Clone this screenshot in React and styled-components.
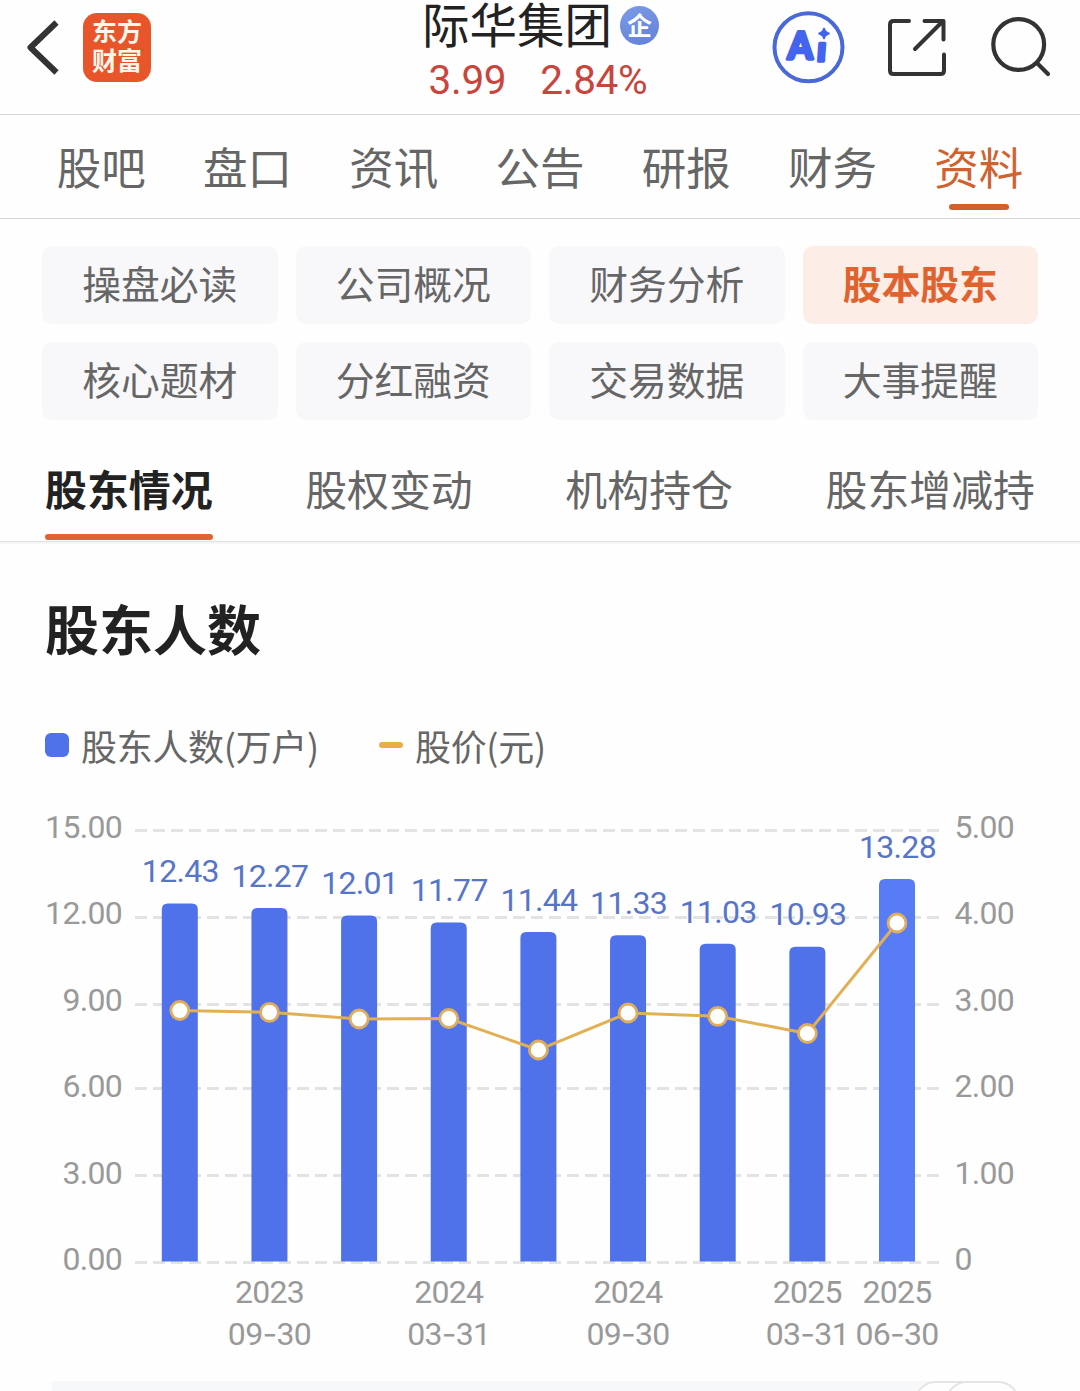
import React from 'react';
import styled, { createGlobalStyle, css } from 'styled-components';

const GlobalStyle = createGlobalStyle`
  * {
    box-sizing: border-box;
  }

  body {
    margin: 0;
    background: #fefefe;
    font-family: 'Noto Sans CJK SC', sans-serif;
    color: #666;
    overflow: hidden;
  }
`;

const Page = styled.div`
  width: 1080px;
  height: 1391px;
  overflow: hidden;
  background: #fefefe;
`;

const Header = styled.header`
  display: grid;
  grid-template-columns: 1fr auto 1fr;
  height: 115px;
  padding: 0 28px 0 24px;
  border-bottom: 1px solid #d6d6d6;
`;

const HeaderLeft = styled.div`
  display: flex;
  align-items: flex-start;
  padding-top: 13px;
  gap: 21px;
`;

const Logo = styled.div`
  width: 68px;
  height: 69px;
  padding-top: 3px;
  border-radius: 14px;
  background: #e8552b;
  color: #fff6ec;
  font-size: 25px;
  font-weight: 700;
  line-height: 29px;
  text-align: center;
`;

const HeaderTitle = styled.div`
  display: flex;
  flex-direction: column;
  align-items: center;
`;

const NameRow = styled.div`
  display: flex;
  align-items: center;
  gap: 8px;
  height: 50px;
  margin-left: 5px;
  color: #222;
  font-size: 47.5px;
  line-height: 46px;
`;

const Name = styled.span`
  height: 50px;
`;

const Badge = styled.span`
  width: 39px;
  height: 39px;
  border-radius: 50%;
  background: linear-gradient(160deg, #7b9ae6, #6381d8);
  color: #fff;
  font-size: 25px;
  font-weight: 700;
  line-height: 37px;
  text-align: center;
`;

const Quote = styled.div`
  display: flex;
  gap: 34px;
  color: #c9453c;
  font-family: Roboto, sans-serif;
  font-size: 40.5px;
  line-height: 61px;
  letter-spacing: -0.3px;
`;

const HeaderRight = styled.div`
  display: flex;
  justify-content: flex-end;
  align-items: flex-start;
  padding-top: 10px;
  gap: 40px;
`;

const Tabs = styled.nav`
  display: flex;
  height: 104px;
  padding: 0 28px;
  border-bottom: 1px solid #d6d6d6;
`;

const Tab = styled.div`
  flex: 1;
  display: flex;
  flex-direction: column;
  align-items: center;
  color: ${({ $active }) => ($active ? '#cf622f' : '#666')};
  font-size: 44.5px;
  line-height: 89px;
  padding-top: 6px;

  ${({ $active }) =>
    $active &&
    css`
      &::after {
        content: '';
        width: 60px;
        height: 6px;
        margin-top: -6px;
        border-radius: 3px;
        background: #d0612f;
      }
    `}
`;

const Chips = styled.div`
  display: grid;
  grid-template-columns: repeat(4, 1fr);
  gap: 18px;
  padding: 27px 42px 0;
`;

const Chip = styled.div`
  height: 78px;
  border-radius: 10px;
  background: ${({ $active }) => ($active ? '#fcede6' : '#f8f8fa')};
  color: ${({ $active }) => ($active ? '#e0632f' : '#666')};
  font-size: 38.8px;
  font-weight: ${({ $active }) => ($active ? 700 : 400)};
  line-height: 72px;
  text-align: center;
`;

const SubTabs = styled.div`
  display: flex;
  justify-content: space-between;
  height: 122px;
  padding: 28px 45px 0;
  border-bottom: 1px solid #e2e2e2;
  box-shadow: 0 2px 0 #f6f6f6;
`;

const SubTab = styled.div`
  height: 90px;
  color: ${({ $active }) => ($active ? '#222' : '#666')};
  font-size: 41.9px;
  font-weight: ${({ $active }) => ($active ? 700 : 400)};
  line-height: 80px;

  ${({ $active }) =>
    $active &&
    css`
      &::after {
        content: '';
        display: block;
        height: 6px;
        margin-top: 6px;
        border-radius: 3px;
        background: #e06433;
      }
    `}
`;

const SectionTitle = styled.h2`
  margin: 46px 45px 0;
  color: #222;
  font-size: 54px;
  font-weight: 700;
  line-height: 80px;
`;

const Legend = styled.div`
  display: flex;
  gap: 60px;
  margin-top: 51px;
  padding: 0 45px;
`;

const LegendItem = styled.div`
  display: flex;
  align-items: center;
  gap: 12px;
  font-size: 36px;
  line-height: 52px;
  letter-spacing: -0.3px;

  &::before {
    content: '';
    width: 24px;
    height: ${({ $line }) => ($line ? 6 : 24)}px;
    border-radius: ${({ $line }) => ($line ? 3 : 6)}px;
    background: ${({ $line }) => ($line ? '#e8ae4a' : '#4f72ea')};
  }
`;

const Chart = styled.svg`
  display: block;
  margin-top: 29px;
  font-family: Roboto, sans-serif;
  font-size: 32px;
  letter-spacing: -0.7px;
`;

const Slider = styled.div`
  display: flex;
  justify-content: flex-end;
  height: 44px;
  margin: 1px 60px 0 52px;
  border-radius: 0 22px 22px 0;
  background: #f7f8fa;
`;

const SliderHandle = styled.div`
  width: 75px;
  height: 44px;
  margin-left: -44px;
  border: 2px solid #e4e4e4;
  border-radius: 22px;
  background: #fefefe;
`;

const tabs = ['股吧', '盘口', '资讯', '公告', '研报', '财务', '资料'];
const chips = ['操盘必读', '公司概况', '财务分析', '股本股东', '核心题材', '分红融资', '交易数据', '大事提醒'];
const subTabs = ['股东情况', '股权变动', '机构持仓', '股东增减持'];

const holders = [
  { count: 12.43, priceY: 210.5 },
  { count: 12.27, priceY: 212.3, date: ['2023', '09', '30'] },
  { count: 12.01, priceY: 219 },
  { count: 11.77, priceY: 218.5, date: ['2024', '03', '31'] },
  { count: 11.44, priceY: 250 },
  { count: 11.33, priceY: 213, date: ['2024', '09', '30'] },
  { count: 11.03, priceY: 216.3 },
  { count: 10.93, priceY: 233.5, date: ['2025', '03', '31'] },
  { count: 13.28, priceY: 123, date: ['2025', '06', '30'] },
];

const leftAxis = ['15.00', '12.00', '9.00', '6.00', '3.00', '0.00'];
const rightAxis = ['5.00', '4.00', '3.00', '2.00', '1.00', '0'];
const gridY = [30.5, 117.5, 204.5, 288.5, 375.5, 462.5];

const BASE = 461.5;
const STEP = 86.4;
const BAR = 36;

const centerX = (i) => 179.8 + i * 89.65;
const topY = (count) => BASE - (count / 3) * STEP;

const barPath = (i, count) => {
  const x = centerX(i) - BAR / 2;
  const y = topY(count);
  return `M${x} ${BASE}V${y + 6}q0 -6 6 -6h${BAR - 12}q6 0 6 6V${BASE}Z`;
};

function HolderChart() {
  return (
    <Chart width="1080" height="580" viewBox="0 0 1080 580">
      {leftAxis.map((label, i) => {
        const textY = 38 + i * STEP;
        return (
          <g key={label} fill="#999">
            <line x1="135" x2="939" y1={gridY[i]} y2={gridY[i]} stroke="#e3e3e3" strokeWidth="3" strokeDasharray="12 6" />
            <text x="122" y={textY} textAnchor="end">{label}</text>
            <text x="954.5" y={textY}>{rightAxis[i]}</text>
          </g>
        );
      })}
      {holders.map(({ count }, i) => (
        <path key={i} d={barPath(i, count)} fill={i === holders.length - 1 ? '#587cf6' : '#4f72ea'} />
      ))}
      <polyline
        points={holders.map((h, i) => `${centerX(i)},${h.priceY}`).join(' ')}
        fill="none"
        stroke="#e2b054"
        strokeWidth="3"
      />
      {holders.map(({ count, priceY, date }, i) => (
        <g key={i} textAnchor="middle">
          <circle cx={centerX(i)} cy={priceY} r="9" fill="#fff" stroke="#dfae5c" strokeWidth="2.8" />
          <text x={centerX(i) + 0.5} y={topY(count) - 21.3} fill="#5674c8">{count.toFixed(2)}</text>
          {date && (
            <g fill="#999">
              <text x={centerX(i)} y="503">{date[0]}</text>
              <text x={centerX(i)} y="545">
                {date[1]}
                <tspan fontFamily="Inter">-</tspan>
                {date[2]}
              </text>
            </g>
          )}
        </g>
      ))}
    </Chart>
  );
}

const BackIcon = () => (
  <svg width="38" height="68" viewBox="24 13 38 68" fill="none" stroke="#333" strokeWidth="6">
    <path d="M56.5 22.5L30.5 47.5L56.5 72.5" strokeLinejoin="round" />
  </svg>
);

const AiIcon = () => (
  <svg width="76" height="76" viewBox="770 10 76 76">
    <circle cx="808.5" cy="47.3" r="34" fill="none" stroke="#4a68d8" strokeWidth="4" />
    <g fill="#4463ee" stroke="#4463ee" strokeWidth="3.4" strokeLinejoin="round" fontFamily="Lato, sans-serif" fontWeight="900">
      <text transform="translate(787.5 59) skewX(-2)" fontSize="37.5" textLength="25" lengthAdjust="spacingAndGlyphs">A</text>
      <text transform="translate(816.5 60.5) skewX(-4)" fontSize="34">ı</text>
    </g>
    <path d="M824 28Q825 32.5 829.5 33.5Q825 34.5 824 39Q823 34.5 818.5 33.5Q823 32.5 824 28Z" fill="#4463ee" stroke="#4463ee" strokeWidth="1.5" />
  </svg>
);

const ShareIcon = () => (
  <svg width="62" height="76" viewBox="886 10 62 76" fill="none" stroke="#333" strokeWidth="4" strokeLinecap="round" strokeLinejoin="round">
    <path d="M909 21H893.5Q890 21 890 24.5V70.5Q890 74 893.5 74H940.5Q944 74 944 70.5V54.5" />
    <path d="M924.5 21H943.5V39.5M943 21L915 49" />
  </svg>
);

const SearchIcon = () => (
  <svg width="64" height="76" viewBox="988 10 64 76" fill="none" stroke="#333" strokeWidth="4.2" strokeLinecap="round">
    <circle cx="1018.7" cy="44.5" r="25.4" />
    <path d="M1037 63L1048 74" />
  </svg>
);

export default function App() {
  return (
    <Page>
      <GlobalStyle />
      <Header>
        <HeaderLeft>
          <BackIcon />
          <Logo>
            东方
            <br />
            财富
          </Logo>
        </HeaderLeft>
        <HeaderTitle>
          <NameRow>
            <Name>际华集团</Name>
            <Badge>企</Badge>
          </NameRow>
          <Quote>
            <span>3.99</span>
            <span>2.84%</span>
          </Quote>
        </HeaderTitle>
        <HeaderRight>
          <AiIcon />
          <ShareIcon />
          <SearchIcon />
        </HeaderRight>
      </Header>
      <Tabs>
        {tabs.map((tab) => (
          <Tab key={tab} $active={tab === '资料'}>{tab}</Tab>
        ))}
      </Tabs>
      <Chips>
        {chips.map((chip) => (
          <Chip key={chip} $active={chip === '股本股东'}>{chip}</Chip>
        ))}
      </Chips>
      <SubTabs>
        {subTabs.map((tab) => (
          <SubTab key={tab} $active={tab === '股东情况'}>{tab}</SubTab>
        ))}
      </SubTabs>
      <SectionTitle>股东人数</SectionTitle>
      <Legend>
        <LegendItem>股东人数(万户)</LegendItem>
        <LegendItem $line>股价(元)</LegendItem>
      </Legend>
      <HolderChart />
      <Slider>
        <SliderHandle />
        <SliderHandle />
      </Slider>
    </Page>
  );
}
